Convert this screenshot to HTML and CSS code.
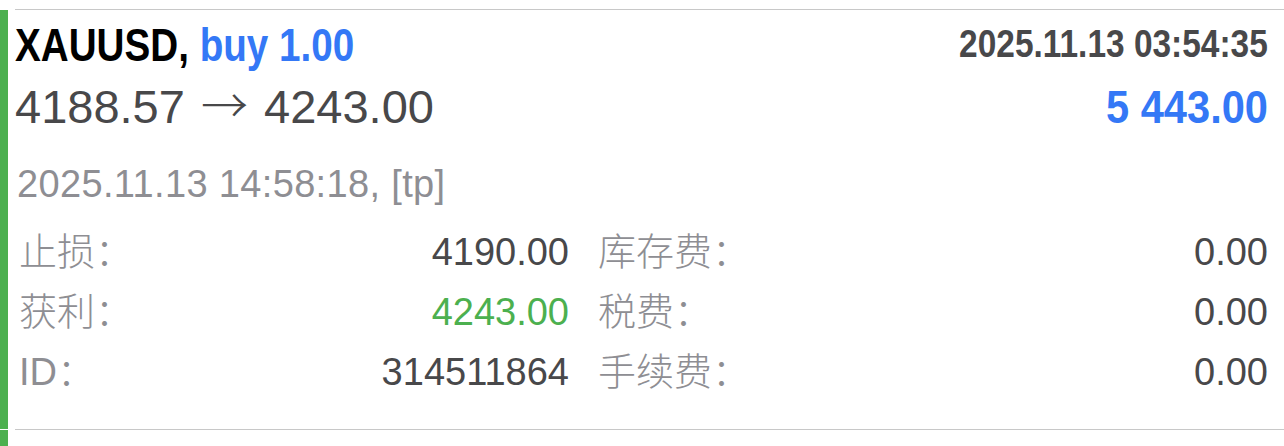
FILE: index.html
```html
<!DOCTYPE html>
<html>
<head>
    <meta charset="utf-8">
    <title>Trade history</title>
    <link rel="stylesheet" href="styles.css">
</head>
<body>
    <div class="history">
        <div class="sep"></div>
        <div class="trade">
            <div class="bar"></div>
            <div class="card">
                <div class="row head">
                    <div class="title">XAUUSD, <span class="buy">buy 1.00</span></div>
                    <div class="opened">2025.11.13 03:54:35</div>
                </div>
                <div class="row prices">
                    <div class="path">4188.57 <span class="arrow">→</span> 4243.00</div>
                    <div class="profit">5 443.00</div>
                </div>
                <div class="closed">2025.11.13 14:58:18, [tp]</div>
                <div class="details">
                    <div class="cell"><span class="label">止损：</span><span class="value">4190.00</span></div>
                    <div class="cell"><span class="label">库存费：</span><span class="value">0.00</span></div>
                    <div class="cell"><span class="label">获利：</span><span class="value tp">4243.00</span></div>
                    <div class="cell"><span class="label">税费：</span><span class="value">0.00</span></div>
                    <div class="cell"><span class="label">ID：</span><span class="value">314511864</span></div>
                    <div class="cell"><span class="label">手续费：</span><span class="value">0.00</span></div>
                </div>
            </div>
        </div>
        <div class="sep"></div>
        <div class="trade next">
            <div class="bar"></div>
            <div class="card"></div>
        </div>
    </div>
</body>
</html>
```

FILE: styles.css
```css
body {
    margin: 0;
    background: #ffffff;
    font-family: "Liberation Sans", "Noto Sans CJK SC", sans-serif;
    color: #48484a;
}

.history {
    padding-top: 9px;
}

.sep {
    height: 1px;
    margin-left: 15px;
    background: #c8c8c8;
}

.trade {
    display: flex;
    height: 419px;
}

.trade.next {
    height: 16px;
}

.bar {
    width: 8px;
    flex: none;
    background: #4cb04f;
}

.card {
    flex: 1;
    padding: 5px 16px 0 7px;
}

.row {
    display: flex;
    justify-content: space-between;
    align-items: flex-start;
}

/* the app uses a condensed bold face, squeeze the bold lines to match */
.title {
    font-weight: bold;
    font-size: 46px;
    line-height: 60px;
    color: #000000;
    transform: scaleX(0.84);
    transform-origin: left center;
}

.buy {
    color: #3478f6;
}

.opened {
    font-weight: bold;
    font-size: 38px;
    line-height: 58px;
    color: #48484a;
    transform: scaleX(0.88);
    transform-origin: right center;
}

.path {
    height: 64px;
    font-size: 47px;
    line-height: 64px;
}

.arrow {
    margin: 0 3px;
    font-family: "Noto Sans CJK SC", sans-serif;
    font-weight: 300;
    line-height: 1;
}

.profit {
    font-weight: bold;
    font-size: 47px;
    line-height: 64px;
    color: #3478f6;
    transform: scaleX(0.885);
    transform-origin: right center;
}

.closed {
    margin: 15px 0 0 2px;
    font-size: 38px;
    line-height: 60px;
    letter-spacing: 0.35px;
    color: #8e8e93;
}

.details {
    display: grid;
    grid-template-columns: 550px 1fr;
    column-gap: 29px;
    margin-top: 8px;
    padding-left: 4px;
}

.cell {
    display: flex;
    justify-content: space-between;
    font-size: 38px;
    line-height: 60px;
}

.label {
    font-weight: 300;
    color: #8e8e93;
}

.value {
    color: #48484a;
}

.value.tp {
    color: #4cb04f;
}
```
